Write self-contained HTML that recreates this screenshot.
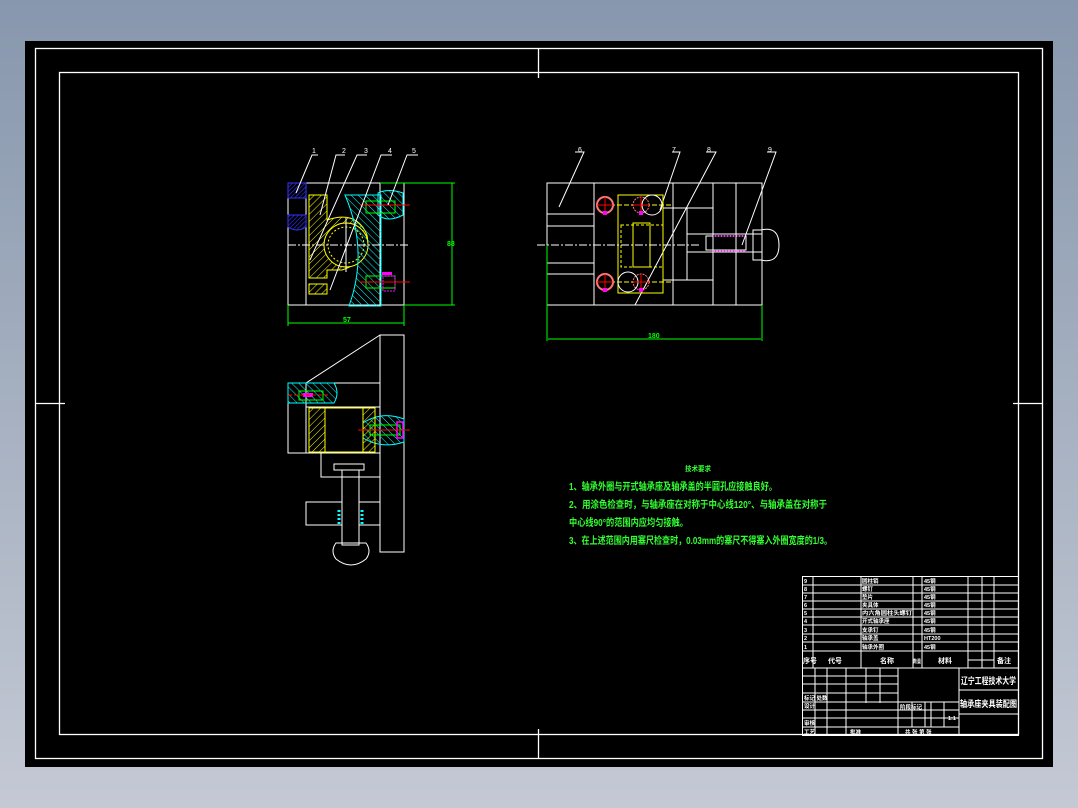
<!DOCTYPE html>
<html><head><meta charset="utf-8"><style>
html,body{margin:0;padding:0;width:1078px;height:808px;overflow:hidden;background:linear-gradient(#8797ad,#c4c9d4);}
svg{position:absolute;left:0;top:0}
text{font-family:"Liberation Sans","Noto Sans CJK SC",sans-serif;}
</style></head><body>
<svg width="1078" height="808" viewBox="0 0 1078 808" xmlns="http://www.w3.org/2000/svg">
<defs>
<pattern id="hy" width="5" height="5" patternUnits="userSpaceOnUse" patternTransform="rotate(45)"><line x1="0" y1="0" x2="0" y2="5" stroke="#ff0" stroke-width="1"/></pattern>
<pattern id="hc" width="5" height="5" patternUnits="userSpaceOnUse" patternTransform="rotate(-45)"><line x1="0" y1="0" x2="0" y2="5" stroke="#0ff" stroke-width="1"/></pattern>
<pattern id="hb" width="3" height="3" patternUnits="userSpaceOnUse" patternTransform="rotate(45)"><line x1="0" y1="0" x2="0" y2="3" stroke="#33f" stroke-width="1.2"/></pattern>
</defs>
<rect x="25" y="41" width="1028" height="726" fill="#000"/>
<g fill="none" stroke="#fff" stroke-width="1.3">
<rect x="35.5" y="48.5" width="1007" height="710"/>
<rect x="59.5" y="72.5" width="959" height="662"/>
<line x1="538.5" y1="48" x2="538.5" y2="78"/><line x1="538.5" y1="729" x2="538.5" y2="759"/>
<line x1="35" y1="403.5" x2="65" y2="403.5"/><line x1="1013" y1="403.5" x2="1043" y2="403.5"/>
</g>

<!-- TOP LEFT VIEW -->
<g stroke-width="1" fill="none">
<rect x="288" y="183" width="116" height="122" stroke="#fff"/>
<line x1="306" y1="183" x2="306" y2="305" stroke="#fff"/>
<line x1="380" y1="183" x2="380" y2="305" stroke="#fff"/>
<rect x="288" y="183" width="18" height="15" fill="url(#hb)" stroke="#33f"/>
<path d="M288 215 h18 v12 q-9 6 -18 0z" fill="url(#hb)" stroke="#33f"/>
<path d="M309 195 h18 v25 q30 -10 40 15 q5 25 -25 35 l-15 0 v8 h-18z" fill="url(#hy)" stroke="#ff0"/>
<rect x="309" y="284" width="18" height="10" fill="url(#hy)" stroke="#ff0"/>
<circle cx="346" cy="245" r="22" stroke="#ff0" fill="#000"/>
<circle cx="346" cy="245" r="18" stroke="#ff0" stroke-dasharray="2 2"/>
<path d="M349 195 h32 v111 h-32 q20 -55 -4 -111z" fill="url(#hc)" stroke="#0ff"/>
<path d="M378 193 q10 -5 25 0 v22 q-15 8 -25 0z" fill="url(#hc)" stroke="#0ff"/>
<rect x="366" y="201" width="29" height="12" stroke="#0f0"/>
<rect x="366" y="276" width="29" height="12" stroke="#0f0"/>
<rect x="383" y="276" width="12" height="15" stroke="#f0f" stroke-dasharray="2 1"/>
<rect x="382" y="272" width="10" height="3" fill="#f0f" stroke="none"/>
<line x1="360" y1="205" x2="410" y2="205" stroke="#f00"/>
<line x1="360" y1="282" x2="410" y2="282" stroke="#f00"/>
<line x1="288" y1="245" x2="410" y2="245" stroke="#fff" stroke-dasharray="8 2 2 2"/>
<line x1="346" y1="218" x2="346" y2="272" stroke="#fff"/>
<line x1="380" y1="183" x2="455" y2="183" stroke="#0f0"/>
<line x1="404" y1="305" x2="455" y2="305" stroke="#0f0"/>
<line x1="452" y1="183" x2="452" y2="305" stroke="#0f0"/>
<line x1="288" y1="305" x2="288" y2="326" stroke="#0f0"/>
<line x1="404" y1="305" x2="404" y2="326" stroke="#0f0"/>
<line x1="288" y1="323" x2="404" y2="323" stroke="#0f0"/>
<g stroke="#fff"><path d="M296 193 L312 155 H318"/><path d="M320 215 L336 155 H345"/><path d="M310 260 L357 155 H367"/><path d="M330 290 L381 155 H392"/><path d="M388 205 L407 155 H418"/></g>
</g>
<g fill="#fff" font-size="7"><text x="312" y="153">1</text><text x="342" y="153">2</text><text x="364" y="153">3</text><text x="388" y="153">4</text><text x="412" y="153">5</text></g>
<g fill="#0f0" font-size="7" font-weight="bold"><text x="343" y="322">57</text><text x="447" y="246">88</text><text x="648" y="338">180</text></g>

<!-- RIGHT VIEW -->
<g stroke-width="1" fill="none">
<rect x="547" y="183" width="215" height="122" stroke="#fff"/>
<g stroke="#fff"><line x1="594" y1="183" x2="594" y2="305"/><line x1="673" y1="183" x2="673" y2="305"/><line x1="713" y1="183" x2="713" y2="305"/><line x1="736" y1="183" x2="736" y2="305"/>
<line x1="547" y1="214" x2="594" y2="214"/><line x1="547" y1="226" x2="594" y2="226"/><line x1="547" y1="263" x2="594" y2="263"/><line x1="547" y1="274" x2="594" y2="274"/>
<line x1="663" y1="208" x2="713" y2="208"/><line x1="663" y1="280" x2="713" y2="280"/><line x1="687" y1="208" x2="687" y2="280"/><line x1="687" y1="234" x2="762" y2="234"/><line x1="687" y1="252" x2="762" y2="252"/>
<rect x="706" y="236" width="40" height="14"/>
<path d="M753 230 h8 q18 -4 18 15 q0 19 -18 15 h-8z"/>
<line x1="762" y1="228" x2="762" y2="260"/>
<path d="M575 152 H584 L559 207"/><path d="M672 152 H680 L660 210"/><path d="M706 152 H716 L635 305"/><path d="M767 152 H776 L742 245"/>
</g>
<rect x="618" y="195" width="45" height="98" stroke="#ff0"/>
<rect x="621" y="225" width="42" height="42" stroke="#ff0" stroke-dasharray="3 2"/>
<rect x="633" y="223" width="17" height="44" stroke="#ff0"/>
<line x1="610" y1="205" x2="673" y2="205" stroke="#ff0" stroke-dasharray="5 2"/>
<line x1="610" y1="282" x2="673" y2="282" stroke="#ff0" stroke-dasharray="5 2"/>
<circle cx="605" cy="205" r="8" stroke="#f77" stroke-width="2"/><circle cx="605" cy="282" r="8" stroke="#f77" stroke-width="2"/>
<circle cx="641" cy="205" r="8" stroke="#f77" stroke-dasharray="2 1"/><circle cx="641" cy="282" r="8" stroke="#f77" stroke-dasharray="2 1"/>
<circle cx="652" cy="205" r="10" stroke="#fff"/><circle cx="628" cy="282" r="10" stroke="#fff"/>
<g stroke="#f00"><path d="M597 205h16M605 197v16M597 282h16M605 274v16M633 205h16M641 197v16M633 282h16M641 274v16"/></g>
<rect x="603" y="211" width="4" height="4" fill="#f0f" stroke="none"/><rect x="603" y="288" width="4" height="4" fill="#f0f" stroke="none"/>
<rect x="639" y="211" width="4" height="4" fill="#f0f" stroke="none"/><rect x="639" y="288" width="4" height="4" fill="#f0f" stroke="none"/>
<line x1="713" y1="236" x2="746" y2="236" stroke="#f0f" stroke-dasharray="2 1"/><line x1="713" y1="251" x2="746" y2="251" stroke="#f0f" stroke-dasharray="2 1"/>
<line x1="537" y1="245" x2="700" y2="245" stroke="#fff" stroke-dasharray="8 2 2 2"/>
<line x1="547" y1="245" x2="547" y2="341" stroke="#0f0"/><line x1="762" y1="305" x2="762" y2="341" stroke="#0f0"/>
<line x1="548" y1="339" x2="761" y2="339" stroke="#0f0"/>
</g>
<g fill="#fff" font-size="7"><text x="578" y="152">6</text><text x="672" y="152">7</text><text x="707" y="152">8</text><text x="768" y="152">9</text></g>

<!-- BOTTOM VIEW -->
<g stroke="#fff" stroke-width="1" fill="none">
<rect x="380" y="335" width="24" height="217"/>
<path d="M306 383 L380 335 M306 383 H380"/>
<rect x="288" y="383" width="18" height="70"/>
<rect x="306" y="407" width="74" height="46"/>
<rect x="321" y="453" width="59" height="24"/>
<rect x="334" y="464" width="30" height="6"/>
<rect x="342" y="470" width="17" height="75"/>
<rect x="306" y="502" width="36" height="23"/><rect x="359" y="502" width="21" height="23"/>
<line x1="359" y1="477" x2="359" y2="502"/><line x1="342" y1="477" x2="342" y2="502"/>
<path d="M336 543 h30 q6 8 0 16 q-15 12 -30 0 q-6 -8 0 -16z"/>
</g>
<g stroke-width="1" fill="none">
<path d="M288 383 h46 q6 10 0 20 h-46z" fill="url(#hc)" stroke="#0ff"/>
<path d="M360 425 q20 -15 44 -6 v23 q-24 8 -44 -6z" fill="url(#hc)" stroke="#0ff"/>
<rect x="309" y="408" width="16" height="44" fill="url(#hy)" stroke="#ff0"/>
<rect x="363" y="408" width="12" height="44" fill="url(#hy)" stroke="#ff0"/>
<rect x="325" y="408" width="38" height="44" fill="#000" stroke="#ff0"/>
<rect x="299" y="391" width="24" height="9" stroke="#0f0"/><rect x="303" y="393" width="10" height="4" fill="#f0f" stroke="none"/>
<rect x="370" y="425" width="30" height="10" stroke="#0f0"/><rect x="397" y="422" width="6" height="16" stroke="#f0f" stroke-width="1.5"/>
<line x1="288" y1="395" x2="330" y2="395" stroke="#f00" stroke-dasharray="4 2"/><line x1="358" y1="430" x2="410" y2="430" stroke="#f00"/>
<path d="M339 510 v15 M362 510 v15" stroke="#0ff" stroke-width="3" stroke-dasharray="2 2"/>
</g>

<!-- NOTES -->
<g fill="#3f3" font-weight="bold" font-size="10">
<text x="685" y="471" font-size="7" textLength="26" lengthAdjust="spacingAndGlyphs">技术要求</text>
<text x="569" y="490" textLength="208" lengthAdjust="spacingAndGlyphs">1、轴承外圈与开式轴承座及轴承盖的半圆孔应接触良好。</text>
<text x="569" y="508" textLength="258" lengthAdjust="spacingAndGlyphs">2、用涂色检查时，与轴承座在对称于中心线120°、与轴承盖在对称于</text>
<text x="569" y="526" textLength="119" lengthAdjust="spacingAndGlyphs">中心线90°的范围内应均匀接触。</text>
<text x="569" y="544" textLength="263" lengthAdjust="spacingAndGlyphs">3、在上述范围内用塞尺检查时，0.03mm的塞尺不得塞入外圈宽度的1/3。</text>
</g>

<!-- TITLE BLOCK -->
<g stroke="#fff" stroke-width="1" fill="none">
<rect x="802.5" y="576.5" width="216" height="159"/>
<path d="M802 585h216M802 593h216M802 601h216M802 609h216M802 617h216M802 625h216M802 634h216M802 642h216M802 651h216M802 668h216"/>
<path d="M813 576v92M861 576v92M913 576v92M922 576v92M968 576v92M982 576v92M994 576v92M968 660h26"/>
<path d="M898 668v68M959 668v68M959 690h59M959 714h59"/>
<path d="M802 676h96M802 684h96M802 693h96M802 702h157M802 710h157M802 718h157M802 727h157"/>
<path d="M815 668v68M827 668v68M846 668v68M866 668v35M880 668v35M898 702v34M912 702v25M925 702v25M931 702v25M944 702v25"/>
</g>
<g fill="#fff" font-size="5.5" font-weight="bold">
<text x="804" y="583">9</text><text x="804" y="591">8</text><text x="804" y="599">7</text><text x="804" y="607">6</text><text x="804" y="615">5</text><text x="804" y="623">4</text><text x="804" y="632">3</text><text x="804" y="640">2</text><text x="804" y="649">1</text>
<text x="862" y="583">圆柱销</text><text x="862" y="591">螺钉</text><text x="862" y="599">垫片</text><text x="862" y="607">夹具体</text><text x="862" y="615" textLength="50" lengthAdjust="spacingAndGlyphs">内六角圆柱头螺钉</text><text x="862" y="623">开式轴承座</text><text x="862" y="632">支承钉</text><text x="862" y="640">轴承盖</text><text x="862" y="649">轴承外圈</text>
<text x="924" y="583">45钢</text><text x="924" y="591">45钢</text><text x="924" y="599">45钢</text><text x="924" y="607">45钢</text><text x="924" y="615">45钢</text><text x="924" y="623">45钢</text><text x="924" y="632">45钢</text><text x="924" y="640">HT200</text><text x="924" y="649">45钢</text>
<text x="803" y="663" font-size="7">序号</text><text x="828" y="663" font-size="7">代号</text><text x="880" y="663" font-size="7">名称</text><text x="913" y="663" font-size="5" textLength="8" lengthAdjust="spacingAndGlyphs">数量</text><text x="938" y="663" font-size="7">材料</text><text x="997" y="663" font-size="7">备注</text>
<text x="804" y="700">标记 处数</text><text x="804" y="708">设计</text><text x="804" y="725">审核</text><text x="804" y="734">工艺</text><text x="850" y="734">批准</text>
<text x="900" y="709">阶段标记</text><text x="948" y="720">1:1</text><text x="905" y="734">共 张 第 张</text>
</g>
<g fill="#fff" font-weight="bold"><text x="961" y="684" font-size="9" textLength="55" lengthAdjust="spacingAndGlyphs">辽宁工程技术大学</text><text x="960" y="707" font-size="9" textLength="57" lengthAdjust="spacingAndGlyphs">轴承座夹具装配图</text></g>
</svg>
</body></html>
